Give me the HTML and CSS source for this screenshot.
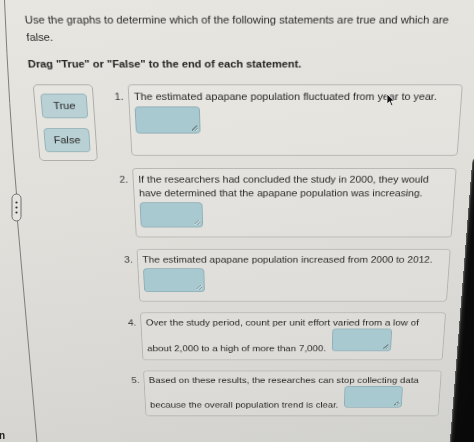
FILE: index.html
```html
<!DOCTYPE html>
<html lang="en">
<head>
<meta charset="utf-8">
<title>True or False</title>
<link rel="stylesheet" href="styles.css">
</head>
<body>
<main class="stage">
  <p class="intro">Use the graphs to determine which of the following statements are true and which are false.</p>
  <p class="instr">Drag "True" or "False" to the end of each statement.</p>
  <div class="content">
    <div class="bank">
      <div class="chip">True</div>
      <div class="chip">False</div>
    </div>
    <ol class="list">
      <li class="item">
        <span class="num">1.</span>
        <div class="card card-first">
          <p class="stmt">The estimated apapane population fluctuated from year to year.</p>
          <span class="drop"></span>
        </div>
      </li>
      <li class="item">
        <span class="num">2.</span>
        <div class="card">
          <p class="stmt">If the researchers had concluded the study in 2000, they would have determined that the apapane population was increasing.</p>
          <span class="drop"></span>
        </div>
      </li>
      <li class="item">
        <span class="num">3.</span>
        <div class="card">
          <p class="stmt">The estimated apapane population increased from 2000 to 2012.</p>
          <span class="drop"></span>
        </div>
      </li>
      <li class="item">
        <span class="num">4.</span>
        <div class="card card-inline">
          <p class="stmt">Over the study period, count per unit effort varied from a low of about 2,000 to a high of more than 7,000.<span class="drop drop-inline"></span></p>
        </div>
      </li>
      <li class="item">
        <span class="num">5.</span>
        <div class="card card-inline">
          <p class="stmt">Based on these results, the researches can stop collecting data because the overall population trend is clear.<span class="drop drop-inline"></span></p>
        </div>
      </li>
    </ol>
  </div>
  <div class="bezel"></div>
</main>

<svg class="divider" width="40" height="442" viewBox="0 0 40 442" aria-hidden="true">
  <path d="M4.5 0 Q9 110 16.5 194" fill="none" stroke="#7d7d7a" stroke-width="1"/>
  <path d="M17.5 221 L37 442" fill="none" stroke="#7d7d7a" stroke-width="1"/>
  <rect x="12" y="194" width="9" height="27" rx="4.5" fill="#e4e3df" stroke="#6f6f6c" stroke-width="1"/>
  <circle cx="16.5" cy="202.5" r="1.1" fill="#333"/>
  <circle cx="16.5" cy="207.5" r="1.1" fill="#333"/>
  <circle cx="16.5" cy="212.5" r="1.1" fill="#333"/>
</svg>
<span class="cut">n</span>

<svg class="cursor" width="10" height="14" viewBox="0 0 10 14" aria-hidden="true">
  <path d="M1 1 L1 11 L3.5 8.6 L5.3 12.6 L6.8 11.9 L5.1 8 L8.4 8 Z" fill="#111" stroke="#f2f2f2" stroke-width="0.8"/>
</svg>
</body>
</html>
```

FILE: styles.css
```css
html, body {
  margin: 0;
  padding: 0;
  width: 474px;
  height: 442px;
  overflow: hidden;
}

html {
  background: #dedcd7;
}

body {
  position: relative;
  background: linear-gradient(172deg, #e8e6e1 0%, #e1dfda 45%, #d8d7d3 80%, #d1d1cd 100%);
  font-family: "Liberation Sans", Arial, Helvetica, sans-serif;
  color: #2b2b2b;
}

.stage {
  position: relative;
  width: 474px;
  height: 442px;
  box-sizing: border-box;
  padding-top: 12px;
  transform-origin: 270px 0;
  transform: perspective(400px) rotateX(-8.4deg);
}

.intro {
  margin: 0;
  padding-left: 23px;
  width: 440px;
  font-size: 11.3px;
  line-height: 17.5px;
  color: #2a2a2a;
}

.instr {
  margin: 11px 0 0;
  padding-left: 22px;
  font-size: 11.3px;
  line-height: 17.5px;
  font-weight: bold;
  color: #242424;
}

.content {
  display: flex;
  align-items: flex-start;
  gap: 11px;
  margin-top: 12px;
  padding-left: 25px;
}

.bank {
  flex: 0 0 auto;
  width: 62px;
  box-sizing: border-box;
  display: flex;
  flex-direction: column;
  gap: 11px;
  padding: 9px 6px;
  border: 1px solid #acaca8;
  border-radius: 5px;
  background: rgba(255, 255, 255, 0.08);
}

.chip {
  height: 27px;
  box-sizing: border-box;
  display: flex;
  align-items: center;
  justify-content: center;
  border: 1px solid #93b3b7;
  border-radius: 4px;
  background: #b9d1d4;
  font-size: 11.5px;
  color: #262626;
}

.list {
  list-style: none;
  margin: 0;
  padding: 0;
  width: 371px;
  display: flex;
  flex-direction: column;
  gap: 14px;
}

.item {
  display: flex;
  align-items: flex-start;
}

.num {
  flex: 0 0 auto;
  width: 20px;
  padding-right: 5px;
  padding-top: 5px;
  text-align: right;
  font-size: 11.2px;
  line-height: 16px;
  color: #3a3a3a;
}

.card {
  flex: 1 1 auto;
  box-sizing: border-box;
  padding: 4px 10px 11px 5px;
  border: 1px solid #b3b3af;
  border-radius: 4px;
  background: rgba(255, 255, 255, 0.1);
}

.card-first {
  min-height: 79px;
}

.card-inline {
  padding-bottom: 7px;
}

.stmt {
  margin: 0;
  font-size: 11.2px;
  line-height: 16px;
  color: #282828;
}

.drop {
  position: relative;
  display: block;
  width: 68px;
  height: 30px;
  box-sizing: border-box;
  margin-top: 3px;
  border: 1px solid #8eadb4;
  border-radius: 4px;
  background: #a9c9d0;
}

.drop::after {
  content: "";
  position: absolute;
  right: 2px;
  bottom: 2px;
  width: 6px;
  height: 6px;
  background: linear-gradient(135deg, transparent 0 40%, #6f8488 40% 50%, #e8f0f1 50% 58%, transparent 58% 70%, #6f8488 70% 80%, #e8f0f1 80% 88%, transparent 88%);
}

.drop-inline {
  display: inline-block;
  vertical-align: baseline;
  margin: 0 0 0 7px;
}

.bezel {
  position: absolute;
  left: 485px;
  top: 166px;
  width: 80px;
  height: 420px;
  border-top-left-radius: 10px;
  background: linear-gradient(90deg, #6a6a68 0, #1c1c1c 2px, #0a0a0a 6px, #050505 100%);
}

.divider {
  position: absolute;
  left: 0;
  top: 0;
}

.cut {
  position: absolute;
  left: -1px;
  top: 430px;
  font-size: 10px;
  font-weight: bold;
  line-height: 12px;
  color: #222;
}

.cursor {
  position: absolute;
  z-index: 6;
  left: 386px;
  top: 93px;
}
```
